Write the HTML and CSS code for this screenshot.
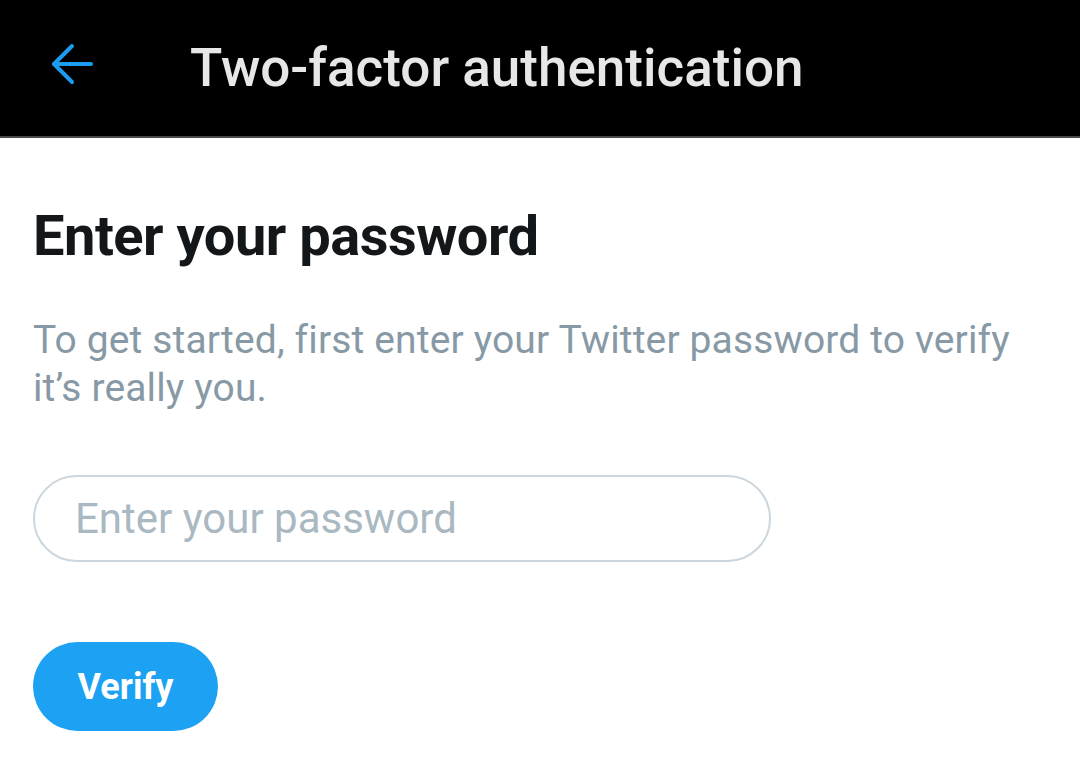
FILE: index.html
```html
<!DOCTYPE html>
<html lang="en">
<head>
  <meta charset="UTF-8">
  <title>Two-factor authentication</title>
  <link rel="stylesheet" href="styles.css">
</head>
<body>
  <header class="topbar">
    <button class="back" aria-label="Back">
      <svg width="44" height="44" viewBox="0 0 44 44" fill="none" stroke="#1d9bf0" stroke-width="4" stroke-linecap="round" stroke-linejoin="round">
        <path d="M41 22H4"/>
        <path d="M22 4L4 22l18 18"/>
      </svg>
    </button>
    <h1 class="title">Two-factor authentication</h1>
  </header>

  <main class="content">
    <h2 class="heading">Enter your password</h2>
    <p class="lead">To get started, first enter your Twitter password to verify it’s really you.</p>
    <form class="form" onsubmit="return false">
      <input class="field" type="password" placeholder="Enter your password">
      <button class="verify" type="submit">Verify</button>
    </form>
  </main>
</body>
</html>
```

FILE: styles.css
```css
* {
  box-sizing: border-box;
}
body {
  margin: 0;
  font-family: Roboto, "Noto Sans", Arial, sans-serif;
  background: #fff;
}
.topbar {
  height: 138px;
  background: #000;
  border-bottom: 2px solid #4a4a4a;
  display: flex;
  align-items: center;
  padding-left: 50px;
}
.back {
  background: none;
  border: none;
  padding: 0;
  width: 44px;
  height: 44px;
  margin-top: -8px;
  cursor: pointer;
}
.back svg {
  display: block;
}
.title {
  margin: 0 0 0 96px;
  color: #e7e7e7;
  font-size: 53px;
  font-weight: 500;
  line-height: 62px;
}
.content {
  padding: 0 33px;
}
.heading {
  margin: 64px 0 0;
  font-size: 56px;
  line-height: 68px;
  font-weight: 700;
  letter-spacing: -0.5px;
  color: #14171a;
}
.lead {
  margin: 46px 0 0;
  font-size: 39px;
  line-height: 48px;
  letter-spacing: 0.14px;
  color: #8899a6;
  max-width: 1000px;
}
.form {
  margin-top: 63px;
}
.field {
  display: block;
  width: 738px;
  height: 87px;
  border: 2px solid #ccd6dd;
  border-radius: 44px;
  padding: 0 40px;
  font-family: inherit;
  font-size: 42px;
  color: #14171a;
  outline: none;
}
.field::placeholder {
  color: #aab8c2;
}
.verify {
  display: block;
  margin-top: 80px;
  width: 185px;
  height: 89px;
  border: none;
  border-radius: 45px;
  background: #1da1f2;
  color: #fff;
  font-family: inherit;
  font-size: 36px;
  font-weight: 700;
  cursor: pointer;
}
```
